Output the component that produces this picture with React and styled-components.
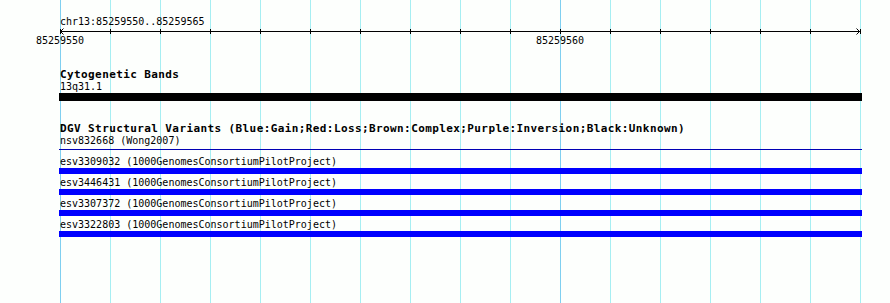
import styled, { createGlobalStyle } from 'styled-components';

const GlobalStyle = createGlobalStyle`
  html, body, #root {
    margin: 0;
    padding: 0;
    height: 100%;
  }
  body {
    background: #fdfffd;
    font-family: "DejaVu Sans Mono", "Liberation Mono", monospace;
    color: #000;
  }
`;

const MAJOR = '#7fcff0';
const MINOR = '#a6eef2';

// grid lines every 50px (one base), darker every 10 bases
const Page = styled.div`
  min-height: 100vh;
  box-sizing: border-box;
  padding: 16px 0 0 59px;
  background-color: #fdfffd;
  background-image: linear-gradient(${MAJOR}, ${MAJOR}),
    linear-gradient(${MAJOR}, ${MAJOR}),
    repeating-linear-gradient(to right, ${MINOR} 0 1px, transparent 1px 50px);
  background-size: 1px 100%, 1px 100%, 801px 100%;
  background-position: 60px 0, 560px 0, 60px 0;
  background-repeat: no-repeat;
`;

const Panel = styled.div`
  width: 803px;
`;

const RegionTitle = styled.div`
  padding-left: 1px;
  font-size: 10px;
  line-height: 12px;
  white-space: pre;
`;

const RulerSvg = styled.svg`
  display: block;
  overflow: visible;
  font-family: "DejaVu Sans Mono", "Liberation Mono", monospace;
  font-size: 10px;
`;

const Track = styled.section`
  margin-top: ${(p) => p.$gap}px;
`;

const TrackTitle = styled.div`
  padding-left: 1px;
  font-size: 11px;
  font-weight: bold;
  letter-spacing: 0.4px;
  line-height: 13px;
  white-space: pre;
`;

const Row = styled.div`
  margin-bottom: ${(p) => p.$after}px;
`;

const FeatureLabel = styled.div`
  padding-left: 1px;
  font-size: 10px;
  line-height: 12px;
  white-space: pre;
`;

const Glyph = styled.div`
  height: ${(p) => p.$h}px;
  background: ${(p) =>
    p.$kind === 'line'
      ? `linear-gradient(to bottom, transparent 2px, ${p.$color} 2px 3px, transparent 3px)`
      : p.$color};
`;

function Ruler() {
  const ticks = [];
  for (let k = 0; k <= 16; k++) ticks.push(1.5 + k * 50);
  return (
    <RulerSvg width="803" height="18">
      <g stroke="#000" strokeWidth="1" shapeRendering="crispEdges">
        <line x1="1" y1="3.5" x2="801" y2="3.5" />
        {ticks.map((x) => (
          <line key={x} x1={x} y1="1" x2={x} y2="6" />
        ))}
      </g>
      <g stroke="#000" strokeWidth="1" fill="none">
        <polyline points="4.5,0.5 1.5,3.5 4.5,6.5" />
        <polyline points="797.5,0.5 800.5,3.5 797.5,6.5" />
      </g>
      <text x="1" y="16" textAnchor="middle">85259550</text>
      <text x="501" y="16" textAnchor="middle">85259560</text>
    </RulerSvg>
  );
}

const variants = [
  { id: 'nsv832668', src: 'Wong2007', kind: 'line', color: '#0000b4' },
  { id: 'esv3309032', src: '1000GenomesConsortiumPilotProject', kind: 'bar', color: '#0000ff' },
  { id: 'esv3446431', src: '1000GenomesConsortiumPilotProject', kind: 'bar', color: '#0000ff' },
  { id: 'esv3307372', src: '1000GenomesConsortiumPilotProject', kind: 'bar', color: '#0000ff' },
  { id: 'esv3322803', src: '1000GenomesConsortiumPilotProject', kind: 'bar', color: '#0000ff' },
];

export default function App() {
  return (
    <>
      <GlobalStyle />
      <Page>
        <Panel>
          <RegionTitle>chr13:85259550..85259565</RegionTitle>
          <Ruler />

          <Track $gap={22}>
            <TrackTitle>Cytogenetic Bands</TrackTitle>
            <Row $after={0}>
              <FeatureLabel>13q31.1</FeatureLabel>
              <Glyph $h={8} $color="#000" />
            </Row>
          </Track>

          <Track $gap={21}>
            <TrackTitle>
              DGV Structural Variants (Blue:Gain;Red:Loss;Brown:Complex;Purple:Inversion;Black:Unknown)
            </TrackTitle>
            {variants.map((v) => (
              <Row key={v.id} $after={3}>
                <FeatureLabel>
                  {v.id} ({v.src})
                </FeatureLabel>
                <Glyph $h={6} $kind={v.kind} $color={v.color} />
              </Row>
            ))}
          </Track>
        </Panel>
      </Page>
    </>
  );
}
